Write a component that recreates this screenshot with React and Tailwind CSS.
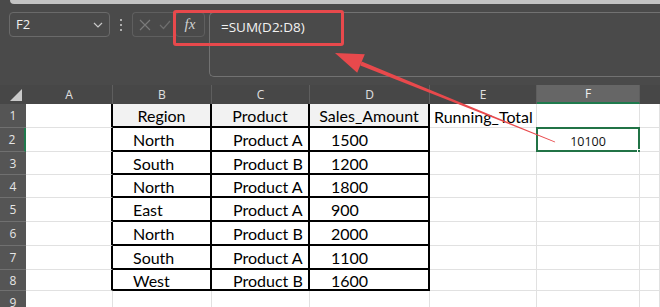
import React from "react";

const cols = [
  { k: "A", w: 87 },
  { k: "B", w: 99 },
  { k: "C", w: 98 },
  { k: "D", w: 120 },
  { k: "E", w: 107 },
  { k: "F", w: 103 },
  { k: "G", w: 20 },
];
const rowHeights = [24, 24, 23, 23, 24, 24, 24, 21, 23];

const data = [
  ["", "Region", "Product", "Sales_Amount", "Running_Total", "", ""],
  ["", "North", "Product A", "1500", "", "10100", ""],
  ["", "South", "Product B", "1200", "", "", ""],
  ["", "North", "Product A", "1800", "", "", ""],
  ["", "East", "Product A", "900", "", "", ""],
  ["", "North", "Product B", "2000", "", "", ""],
  ["", "South", "Product A", "1100", "", "", ""],
  ["", "West", "Product B", "1600", "", "", ""],
  ["", "", "", "", "", "", ""],
];

const cellFont = { fontFamily: "Lato, 'Open Sans', sans-serif" };

function Cell({ r, c, w, h }) {
  const isTable = r >= 1 && r <= 8 && c >= 1 && c <= 3;
  const isA = c === 0 && r <= 8;
  let border = "border-r border-b border-[#e1e1e1]";
  if (isTable) border = "border-r-2 border-b-2 border-black";
  else if (isA) border = "border-r-2 border-r-black border-b border-b-[#e1e1e1]";
  const bg = r === 1 && isTable ? "bg-[#f2f2f2]" : "bg-white";
  const text = data[r - 1][c];
  let align = "justify-start pl-[22px]";
  if (r === 1 && isTable) align = "justify-center";
  if (c === 1 && r > 1) align = "justify-start pl-[20px]";
  if (c === 2 && r > 1) align = "justify-start pl-[21px]";
  if (c === 3 && r > 1) align = "justify-start pl-[21px]";
  if (c === 4) align = "justify-start pl-[4px]";
  if (c === 5 || c === 6 || c === 0) align = "justify-center";
  const isSel = r === 2 && c === 5;
  return (
    <div
      className={`relative flex shrink-0 items-center overflow-visible whitespace-nowrap pt-[2px] text-[16px] text-black ${border} ${bg} ${align}`}
      style={{ width: w, height: h, ...cellFont }}
    >
      {isSel ? (
        <>
          <div className="absolute left-[-1px] top-[-1px] right-[-1px] bottom-[-1px] border-2 border-[#217346]" />
          <div className="absolute right-[-4px] bottom-[-4px] h-[6px] w-[6px] border border-white bg-[#217346]" />
          <div className="flex w-full justify-center pt-[3px] text-[12.5px] text-[#111]" style={{ fontFamily: "'Open Sans', sans-serif" }}>
            {text}
          </div>
        </>
      ) : (
        <span className="leading-none">{text}</span>
      )}
    </div>
  );
}

export default function App() {
  return (
    <div className="relative h-[307px] w-[660px] overflow-hidden bg-white" style={{ fontFamily: "'Open Sans', sans-serif" }}>
      {/* Formula bar area */}
      <div className="flex h-[85px] flex-col bg-[#4a4a4a]">
        <div className="ml-[10px] h-[4px] rounded-bl-[4px] bg-[#c4c4c4]" />
        <div className="flex flex-1">
          <div className="flex h-[33px] w-[209px] shrink-0 items-end">
            <div className="ml-[9px] flex h-[25px] w-[101px] items-center justify-between rounded-[4px] border border-[#6a6a6a] px-[6px]">
              <span className="text-[13px] text-[#f0f0f0]">F2</span>
              <svg width="10" height="6" viewBox="0 0 10 6">
                <path d="M1 1 L5 5 L9 1" stroke="#c8c8c8" strokeWidth="1.2" fill="none" />
              </svg>
            </div>
            <div className="flex h-[25px] w-[22px] flex-col items-center justify-center gap-[3px]">
              <div className="h-[2px] w-[2px] rounded-full bg-[#d0d0d0]" />
              <div className="h-[2px] w-[2px] rounded-full bg-[#d0d0d0]" />
              <div className="h-[2px] w-[2px] rounded-full bg-[#d0d0d0]" />
            </div>
            <div className="flex h-[25px] w-[43px] items-center gap-[8px] rounded-l-[4px] border border-r-0 border-[#5f5f5f] pl-[6px]">
              <svg width="12" height="12" viewBox="0 0 12 12">
                <path d="M1 1 L11 11 M11 1 L1 11" stroke="#7a7a7a" strokeWidth="1.2" fill="none" />
              </svg>
              <svg width="12" height="10" viewBox="0 0 12 10">
                <path d="M1 5 L4.5 8.5 L11 1" stroke="#6e6e6e" strokeWidth="1.2" fill="none" />
              </svg>
            </div>
            <div className="flex h-[25px] w-[30px] items-center justify-center rounded-[4px] border border-[#5f5f5f]">
              <span className="text-[15px] italic text-[#d0d0d0]" style={{ fontFamily: "'Liberation Serif', serif" }}>
                fx
              </span>
            </div>
          </div>
          <div className="mt-[8px] flex h-[65px] flex-1 rounded-l-[5px] border border-r-0 border-[#727272] pl-[11px] pt-[4px]">
            <span className="text-[13.5px] text-[#f2f2f2]">=SUM(D2:D8)</span>
          </div>
        </div>
      </div>

      {/* Column headers */}
      <div className="flex h-[19px] bg-[#474747]">
        <div className="flex h-full w-[26px] shrink-0 items-end justify-end pb-[3px] pr-[4px]">
          <svg width="12" height="12" viewBox="0 0 12 12">
            <path d="M12 0 L12 12 L0 12 Z" fill="#c9c9c9" />
          </svg>
        </div>
        {cols.map((col) => (
          <div
            key={col.k}
            className={`flex h-full shrink-0 items-center justify-center text-[12px] ${
              col.k === "F"
                ? "border-b-2 border-b-[#1f7a4d] bg-[#666666] text-[#f0f0f0]"
                : "text-[#e0e0e0]"
            } ${col.k === "G" ? "" : "border-r border-r-[#5e5e5e]"}`}
            style={{ width: col.w }}
          >
            {col.k === "G" ? "" : col.k}
          </div>
        ))}
      </div>

      {/* Rows */}
      {rowHeights.map((h, i) => {
        const r = i + 1;
        return (
          <div key={r} className="flex" style={{ height: h }}>
            <div
              className={`flex h-full w-[26px] shrink-0 items-center justify-center border-b border-b-[#707070] bg-[#555555] pt-[1px] text-[12px] text-[#e6e6e6] ${
                r === 2 ? "border-r-2 border-r-[#1f7a4d]" : ""
              }`}
            >
              {r}
            </div>
            {cols.map((col, c) => (
              <Cell key={col.k} r={r} c={c} w={col.w} h={h} />
            ))}
          </div>
        );
      })}

      {/* Red highlight box */}
      <div className="absolute left-[173px] top-[10px] h-[36px] w-[171px] rounded-[3px] border-[3px] border-[#e8494c]" />

      {/* Red arrow */}
      <svg className="pointer-events-none absolute left-0 top-0" width="660" height="307" viewBox="0 0 660 307">
        <polygon points="335,53 364.8,54.2 357.2,72.8" fill="#e8494c" />
        <polygon points="361.7,61.6 360.3,65.4 555.2,142.5 554.8,141.5" fill="#e8494c" />
      </svg>
    </div>
  );
}
